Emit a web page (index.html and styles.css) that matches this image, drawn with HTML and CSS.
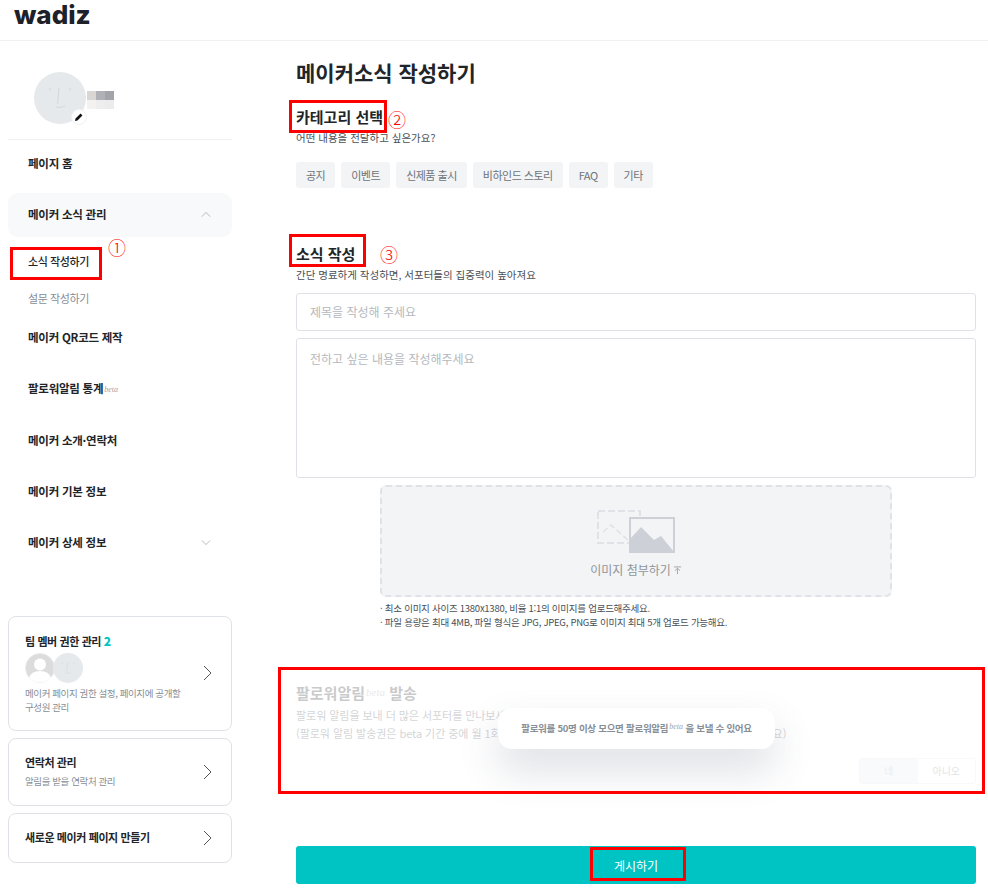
FILE: index.html
```html
<!DOCTYPE html>
<html lang="ko">
<head>
<meta charset="utf-8">
<title>메이커소식 작성하기</title>
<link rel="stylesheet" href="styles.css">
</head>
<body>
<header class="topbar"><span class="logo">wadiz</span></header>
<div class="layout">
  <aside class="sidebar">
    <div class="profile">
      <div class="avatar">
        <svg viewBox="0 0 52 52" class="face"><circle cx="26" cy="26" r="26" fill="#e6e9ec"/><path d="M16 16v3M36 16v3M25 16l-1.500 16M22 35q5 1 9-1" stroke="#d6d9dc" stroke-width="1.200" fill="none"/></svg>
        <span class="edit"><svg viewBox="0 0 16 16" width="10" height="10"><path d="M1.500 14.500l1-4 8-8 3 3-8 8z" fill="#111"/></svg></span>
      </div>
      <div class="name-blur"><i class="c1"></i><i class="c2"></i><i class="c3"></i><i class="c4"></i><i class="c5"></i><i class="c6"></i></div>
    </div>
    <nav class="nav">
      <a class="nav-item">페이지 홈</a>
      <a class="nav-item open">메이커 소식 관리
        <svg class="chev" viewBox="0 0 12 8" width="10" height="7"><path d="M1 6.500l5-5 5 5" fill="none" stroke="#a8adb3"/></svg></a>
      <a class="sub active">소식 작성하기</a>
      <a class="sub second">설문 작성하기</a>
      <a class="nav-item after-sub">메이커 QR코드 제작</a>
      <a class="nav-item">팔로워알림 통계<em class="beta nav-beta">beta</em></a>
      <a class="nav-item">메이커 소개·연락처</a>
      <a class="nav-item">메이커 기본 정보</a>
      <a class="nav-item">메이커 상세 정보
        <svg class="chev" viewBox="0 0 12 8" width="10" height="7"><path d="M1 1.500l5 5 5-5" fill="none" stroke="#a8adb3"/></svg></a>
    </nav>
    <div class="cards">
      <div class="card card-team">
        <div class="card-body">
          <div class="card-title">팀 멤버 권한 관리 <b class="count">2</b></div>
          <div class="members">
            <svg class="member" viewBox="0 0 30 30"><circle cx="15" cy="15" r="14.500" fill="#dcdcdc" stroke="#e9ebed"/><circle cx="15" cy="11.500" r="6" fill="#fff"/><path d="M4 25q2-7 11-7t11 7q-5 4.500-11 4.500T4 25z" fill="#fff"/></svg>
            <svg class="member overlap" viewBox="0 0 52 52"><circle cx="26" cy="26" r="26" fill="#e6e9ec"/><path d="M16 16v3M36 16v3M25 16l-1.500 16M22 35q5 1 9-1" stroke="#d6d9dc" stroke-width="1.200" fill="none"/></svg>
          </div>
          <p class="card-desc">메이커 페이지 권한 설정, 페이지에 공개할<br>구성원 관리</p>
        </div>
        <svg class="arrow" viewBox="0 0 9 16" width="9" height="16"><path d="M1 1l7 7-7 7" fill="none" stroke="#50555a"/></svg>
      </div>
      <div class="card card-contact">
        <div class="card-body">
          <div class="card-title">연락처 관리</div>
          <p class="card-desc">알림을 받을 연락처 관리</p>
        </div>
        <svg class="arrow" viewBox="0 0 9 16" width="9" height="16"><path d="M1 1l7 7-7 7" fill="none" stroke="#50555a"/></svg>
      </div>
      <div class="card card-new">
        <div class="card-body"><div class="card-title">새로운 메이커 페이지 만들기</div></div>
        <svg class="arrow" viewBox="0 0 9 16" width="9" height="16"><path d="M1 1l7 7-7 7" fill="none" stroke="#50555a"/></svg>
      </div>
    </div>
  </aside>
  <main class="main">
    <h1 class="page-title">메이커소식 작성하기</h1>
    <section class="block-category">
      <h2 class="sec-title">카테고리 선택</h2>
      <p class="sec-desc">어떤 내용을 전달하고 싶은가요?</p>
      <div class="chips">
        <button class="chip">공지</button><button class="chip">이벤트</button><button class="chip">신제품 출시</button><button class="chip">비하인드 스토리</button><button class="chip">FAQ</button><button class="chip">기타</button>
      </div>
    </section>
    <section class="block-write">
      <h2 class="sec-title">소식 작성</h2>
      <p class="sec-desc">간단 명료하게 작성하면, 서포터들의 집중력이 높아져요</p>
      <div class="input">제목을 작성해 주세요</div>
      <div class="textarea">전하고 싶은 내용을 작성해주세요</div>
      <div class="upload">
        <svg class="upload-icon" viewBox="0 0 78 44" width="78" height="44">
          <path d="M1 1h42v32H1z" fill="none" stroke="#dfe2e6" stroke-width="2" stroke-dasharray="7 3"/>
          <path d="M6 22l8-7 18 16" fill="none" stroke="#dfe2e6" stroke-width="1.500" stroke-dasharray="6 3"/>
          <path d="M33 8h44v34H33z" fill="#f2f4f6" stroke="#cdd1d7" stroke-width="2"/>
          <path d="M33 42V29l11-12 13 13 7-4 13 16z" fill="#cdd1d7"/>
        </svg>
        <div class="upload-label">이미지 첨부하기<svg viewBox="0 0 10 10" width="9" height="9"><path d="M1 1h8M5 9V2.500M2.200 5.200L5 2.500l2.800 2.700" fill="none" stroke="#9da2a8"/></svg></div>
      </div>
      <ul class="notes">
        <li>· 최소 이미지 사이즈 1380x1380, 비율 1:1의 이미지를 업로드해주세요.</li>
        <li>· 파일 용량은 최대 4MB, 파일 형식은 JPG, JPEG, PNG로 이미지 최대 5개 업로드 가능해요.</li>
      </ul>
    </section>
    <section class="block-follower">
      <div class="follower-faded">
        <h2 class="follower-title">팔로워알림<em class="beta">beta</em> 발송</h2>
        <p class="follower-desc">팔로워 알림을 보내 더 많은 서포터를 만나보세요.<br>(팔로워 알림 발송권은 beta 기간 중에 월 1회 무료로 제공되며 매월 1일에 자동으로 지급되니 참고해 주세요)</p>
        <div class="toggle"><span class="yes">네</span><span class="no">아니오</span></div>
      </div>
      <div class="toast">팔로워를 50명 이상 모으면 팔로워알림<em class="beta">beta</em> 을 보낼 수 있어요</div>
    </section>
    <button class="submit">게시하기</button>
  </main>
</div>
<div class="mark m-write"></div>
<div class="mark m-cat"></div>
<div class="mark m-news"></div>
<div class="mark m-follow"></div>
<div class="mark m-submit"></div>
<span class="num n1">①</span>
<span class="num n2">②</span>
<span class="num n3">③</span>
</body>
</html>
```
FILE: styles.css
```css
* { box-sizing: border-box; }
html, body { margin: 0; padding: 0; }
body {
  position: relative;
  height: 893px;
  overflow: hidden;
  background: #fff;
  color: #212529;
  font-family: "Noto Sans CJK KR", "Noto Sans", sans-serif;
  font-size: 12px;
}
.topbar {
  height: 41px;
  border-bottom: 1px solid #f0f1f2;
  padding-left: 14px;
}
.logo {
  display: block;
  font-family: Inter, sans-serif;
  font-weight: 800;
  font-size: 26px;
  line-height: 29px;
  color: #1d2129;
}
.layout { display: flex; }
.sidebar { width: 224px; margin-left: 8px; flex: none; }
.profile {
  height: 99px;
  border-bottom: 1px solid #f0f1f2;
  padding: 31px 0 0 26px;
  display: flex;
  gap: 1px;
}
.avatar { position: relative; width: 52px; height: 52px; }
.face { width: 52px; height: 52px; display: block; }
.edit {
  position: absolute;
  right: -1px;
  bottom: -1px;
  width: 16px;
  height: 16px;
  border-radius: 50%;
  background: #fff;
  border: 1px solid #f1f2f3;
  display: flex;
  align-items: center;
  justify-content: center;
}
.edit svg { display: block; }
.name-blur {
  display: grid;
  grid-template-columns: repeat(3, 9px);
  grid-template-rows: 9px 9px;
  margin-top: 19px;
}
.c1 { background: #d9d6d3; }
.c2 { background: #b0b1b6; }
.c3 { background: #a2a4a9; }
.c4 { background: #f3f2f1; }
.c5 { background: #eeeeef; }
.c6 { background: #ececee; }
.nav { display: flex; flex-direction: column; }
.nav-item {
  height: 44px;
  margin-bottom: 7.250px;
  padding: 0 20px 2px;
  display: flex;
  align-items: center;
  font-size: 11.500px;
  letter-spacing: -.25px;
  font-weight: 700;
  color: #212529;
  border-radius: 10px;
}
.nav-item:first-child { margin-top: 2px; margin-bottom: 7px; }
.nav-item .chev { margin-left: auto; margin-right: 1px; }
.nav-item.open { background: #f8f9fa; margin-bottom: 0; }
.nav-item.after-sub { margin-top: 5px; }
.sub {
  padding: 0 20px;
  display: flex;
  align-items: center;
  font-size: 11px;
  letter-spacing: -.4px;
  color: #868e96;
}
.sub.active { color: #212529; font-weight: 500; height: 48px; }
.sub.second { height: 26px; }
.beta {
  font-family: "Liberation Serif", serif;
  font-style: italic;
  font-weight: 400;
  font-size: 8px;
  letter-spacing: 0;
  color: #a0a4a8;
  position: relative;
  top: -3px;
  margin-left: 1px;
}
.nav-beta { top: 1px; }
.cards { margin-top: 43.750px; display: flex; flex-direction: column; gap: 7px; }
.card {
  border: 1px solid #dee2e6;
  border-radius: 8px;
  display: flex;
  align-items: center;
  padding: 0 19px 1px 16px;
  justify-content: space-between;
}
.card-team { height: 115px; }
.card-contact { height: 68px; }
.card-new { height: 50px; }
.card-title { font-size: 11px; letter-spacing: -.4px; font-weight: 700; line-height: 17px; color: #212529; }
.count { color: #00c4c4; font-size: 12px; }
.members { display: flex; margin: 3px 0 1px; }
.member { width: 30px; height: 30px; display: block; }
.overlap { margin-left: -2px; }
.card-desc { margin: 3px 0 0; font-size: 9.500px; letter-spacing: -.4px; line-height: 14.500px; color: #868e96; }
.arrow { flex: none; }
.main { width: 680px; margin-left: 64px; flex: none; position: relative; }
.page-title { margin: 15px 0 0; font-size: 21px; line-height: 32px; font-weight: 700; color: #212529; }
.sec-title { margin: 0; font-size: 15px; line-height: 22px; font-weight: 700; color: #212529; }
.sec-desc { margin: 2px 0 0; font-size: 10.500px; line-height: 15px; color: #495057; }
.block-category { margin-top: 18px; height: 138px; }
.chips { display: flex; gap: 6px; margin-top: 17px; }
.chip {
  height: 26px;
  padding: 0 10px;
  border: 0;
  border-radius: 3px;
  background: #f2f4f6;
  font: 400 11px "Noto Sans CJK KR", sans-serif;
  letter-spacing: -.5px;
  color: #6d7378;
}
.block-write .sec-title { margin-top: -1px; }
.input, .textarea {
  border: 1px solid #dee2e6;
  border-radius: 3px;
  padding: 0 13px;
  font-size: 12px;
  color: #b4b9be;
}
.input { height: 38px; margin-top: 11px; line-height: 36px; }
.textarea { height: 140px; margin-top: 7px; padding-top: 11px; line-height: 18px; }
.upload {
  width: 512px;
  height: 112px;
  margin: 7px 0 0 84px;
  border: 2px dashed #dfe2e6;
  border-radius: 6px;
  background: #f2f4f6;
  display: flex;
  flex-direction: column;
  align-items: center;
  padding-top: 23px;
}
.upload-icon { display: block; }
.upload-label {
  margin-top: 7px;
  display: flex;
  align-items: center;
  gap: 2px;
  font-size: 12px;
  line-height: 18px;
  color: #8f959a;
}
.notes { list-style: none; margin: 4px 0 0 84px; padding: 0; font-size: 9.500px; letter-spacing: -.26px; line-height: 14px; color: #495057; }
.block-follower { position: relative; height: 164px; margin-top: 53px; }
.follower-faded { opacity: .24; }
.follower-title { margin: 0; font-size: 15px; line-height: 22px; font-weight: 700; color: #212529; }
.follower-title .beta { font-size: 11px; }
.follower-desc { margin: 0; font-size: 11px; letter-spacing: -.05px; line-height: 18px; color: #495057; white-space: nowrap; }
.toggle {
  display: flex;
  width: 117px;
  height: 26px;
  margin: 16px 0 0 auto;
  border: 1px solid #e3e5e8;
  border-radius: 3px;
  font-size: 10px;
  color: #868e96;
  text-align: center;
  line-height: 24px;
}
.yes { flex: 1; background: #e9ecef; color: #adb5bd; }
.no { flex: 1; }
.toast {
  position: absolute;
  left: 202px;
  top: 26px;
  width: 277px;
  height: 41px;
  border-radius: 14px;
  background: #fff;
  box-shadow: 0 20px 40px rgba(60, 70, 100, .18);
  text-align: center;
  line-height: 41px;
  font-size: 9.500px;
  letter-spacing: -.28px;
  font-weight: 700;
  color: #868e96;
}
.submit {
  display: block;
  width: 680px;
  height: 38px;
  border: 0;
  border-radius: 3px;
  background: #00c4c4;
  color: #fff;
  font: 400 12px "Noto Sans CJK KR", sans-serif;
}
.mark { position: absolute; border: 3px solid #f00; }
.m-write { left: 10px; top: 247px; width: 92px; height: 33px; }
.m-cat { left: 289px; top: 100px; width: 98px; height: 33px; }
.m-news { left: 289px; top: 234px; width: 77px; height: 33px; }
.m-follow { left: 278px; top: 667px; width: 707px; height: 127px; }
.m-submit { left: 590px; top: 847px; width: 96px; height: 34px; }
.num { position: absolute; color: #f00; font-family: "Noto Sans CJK KR", sans-serif; font-size: 18px; font-weight: 300; line-height: 20px; }
.n1 { left: 108px; top: 237px; }
.n2 { left: 388px; top: 109px; }
.n3 { left: 380px; top: 244px; }
```
